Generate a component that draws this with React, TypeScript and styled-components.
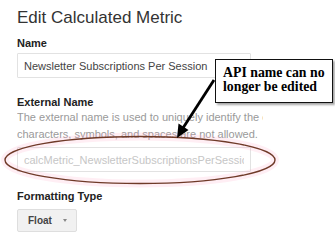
import React from 'react';
import styled, { createGlobalStyle } from 'styled-components';

const GlobalStyle = createGlobalStyle`
  html, body {
    margin: 0;
    padding: 0;
    background: #ffffff;
  }
  body {
    font-family: "Liberation Sans", Arial, sans-serif;
  }
`;

const Page = styled.div`
  position: relative;
  width: 335px;
  height: 240px;
  overflow: hidden;
  box-sizing: border-box;
  padding: 8px 0 0 17px;
  background: #fff;
`;

const Title = styled.h1`
  margin: 0;
  font-size: 17px;
  line-height: 20px;
  font-weight: normal;
  color: #333;
`;

const Label = styled.div<{ $gap: number }>`
  margin-top: ${(p) => p.$gap}px;
  font-size: 11px;
  line-height: 14px;
  font-weight: bold;
  color: #222;
`;

const TextInput = styled.input<{ $muted?: boolean; $gap: number }>`
  display: block;
  box-sizing: border-box;
  margin: ${(p) => p.$gap}px 0 0;
  width: 234px;
  height: 25px;
  padding: 0 6px;
  border: 1px solid #e2e2e2;
  border-radius: 1px;
  background: #fff;
  font-family: "Liberation Sans", Arial, sans-serif;
  font-size: 11px;
  color: ${(p) => (p.$muted ? '#c6c6c6' : '#444')};
  outline: none;
`;

const Help = styled.div`
  width: 246px;
  overflow: hidden;
  font-size: 11px;
  line-height: 17px;
  color: #9a9a9a;
`;

const HelpLine = styled.span`
  display: block;
  white-space: nowrap;
`;

const Dropdown = styled.button`
  display: flex;
  align-items: center;
  gap: 11px;
  box-sizing: border-box;
  margin-top: 6px;
  width: 60px;
  height: 23px;
  padding: 0 0 0 10px;
  border: 1px solid #dedede;
  border-radius: 2px;
  background: #f1f1f1;
  font-family: "Liberation Sans", Arial, sans-serif;
  font-size: 10px;
  font-weight: bold;
  color: #444;
`;

const Caret = styled.span`
  width: 0;
  height: 0;
  border-left: 2.5px solid transparent;
  border-right: 2.5px solid transparent;
  border-top: 3px solid #888;
`;

const Callout = styled.div`
  position: absolute;
  left: 215px;
  top: 59px;
  width: 118px;
  height: 44px;
  box-sizing: border-box;
  padding: 6px 0 0 7px;
  border: 1px solid #111;
  background: #fff;
  box-shadow: 2px 2px 2px rgba(0, 0, 0, 0.35);
  font-family: "Liberation Serif", "Times New Roman", serif;
  font-weight: bold;
  font-size: 13.8px;
  line-height: 14px;
  color: #000;
`;

const Markup = styled.svg`
  position: absolute;
  left: 0;
  top: 0;
  pointer-events: none;
`;

export default function App() {
  return (
    <>
      <GlobalStyle />
      <Page>
        <Title>Edit Calculated Metric</Title>

        <Label $gap={8}>Name</Label>
        <TextInput $gap={3} readOnly defaultValue="Newsletter Subscriptions Per Session" />

        <Label $gap={17}>External Name</Label>
        <Help>
          <HelpLine>The external name is used to uniquely identify the calculated metric.</HelpLine>
          <HelpLine>characters, symbols, and spaces are not allowed.</HelpLine>
        </Help>
        <TextInput
          $gap={4}
          $muted
          readOnly
          defaultValue="calcMetric_NewsletterSubscriptionsPerSession"
        />

        <Label $gap={17}>Formatting Type</Label>
        <Dropdown>
          Float
          <Caret />
        </Dropdown>

        <Markup width="335" height="240" viewBox="0 0 335 240">
          <ellipse cx="140" cy="160" rx="135" ry="23.5" fill="none" stroke="rgba(255,170,200,0.2)" strokeWidth="8" />
          <ellipse cx="140" cy="160" rx="135" ry="23.5" fill="none" stroke="#6f3a28" strokeWidth="1.4" />
          <line x1="214" y1="80" x2="183" y2="128" stroke="#000" strokeWidth="2.8" />
          <polygon points="177,138 178.5,123.5 188.5,130" fill="#000" />
        </Markup>

        <Callout>
          API name can no
          <br />
          longer be edited
        </Callout>
      </Page>
    </>
  );
}
